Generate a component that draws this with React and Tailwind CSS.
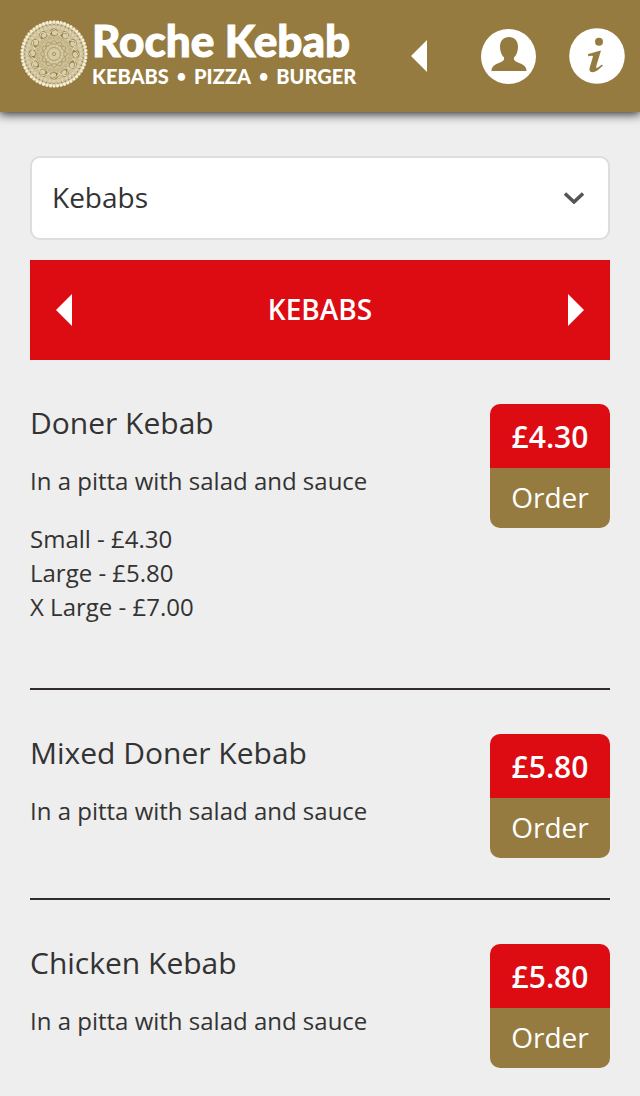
const items = [
  {
    name: "Doner Kebab",
    description: "In a pitta with salad and sauce",
    price: "£4.30",
    sizes: ["Small - £4.30", "Large - £5.80", "X Large - £7.00"],
  },
  { name: "Mixed Doner Kebab", description: "In a pitta with salad and sauce", price: "£5.80", sizes: [] },
  { name: "Chicken Kebab", description: "In a pitta with salad and sauce", price: "£5.80", sizes: [] },
];

function Ring({ count, radius, children }) {
  return Array.from({ length: count }, (_, i) => (
    <g key={i} transform={`rotate(${(360 / count) * i}) translate(0 ${-radius})`}>
      {children}
    </g>
  ));
}

function Mandala() {
  return (
    <svg viewBox="-34 -34 68 68" className="size-[68px] shrink-0" fill="none" aria-hidden="true">
      <circle r="32" fill="#cdc19b" />
      <Ring count={56} radius={32}><circle r="1.7" fill="#f3edd5" /></Ring>
      <Ring count={48} radius={29.5}><circle r="0.8" fill="#a28b50" /></Ring>
      <Ring count={40} radius={27}><circle r="1" stroke="#e6ddbd" strokeWidth="0.8" /></Ring>
      <Ring count={12} radius={22}>
        <path d="M-4 2.5Q-5 -3 0 -3.5Q5 -3 4 2.5Q0 5 -4 2.5Z" fill="#957d40" />
        <ellipse cx="0.6" cy="0.9" rx="2.7" ry="2.2" fill="#d9cfab" />
        <path d="M-5.2 3Q0 -8 5.2 3" stroke="#e4dab8" strokeWidth="1" />
      </Ring>
      <Ring count={24} radius={16.5}><circle r="1.3" stroke="#b7a675" strokeWidth="0.7" /></Ring>
      <Ring count={12} radius={12.5}><path d="M-3 2Q0 -4 3 2Q0 4 -3 2" stroke="#ac9963" strokeWidth="0.8" /></Ring>
      <Ring count={16} radius={8.5}><circle r="0.8" fill="#e4dab8" /></Ring>
      <circle r="6.5" stroke="#b09e69" strokeWidth="0.9" />
      <Ring count={8} radius={4}><circle r="1.2" stroke="#e4dab8" strokeWidth="0.6" /></Ring>
      <circle r="1.7" stroke="#a8935c" strokeWidth="0.8" />
    </svg>
  );
}

function Arrow({ direction }) {
  return (
    <svg viewBox="0 0 16 32" className="h-8 w-4 fill-white" aria-hidden="true">
      <path d={direction === "left" ? "M16 0V32L0 16Z" : "M0 0V32L16 16Z"} />
    </svg>
  );
}

function Header() {
  return (
    <header className="flex h-28 items-center bg-[#957b3f] pr-[15px] pl-5 shadow-[0_1px_10px_1px_rgba(0,0,0,0.85)]">
      <a href="#home" className="flex items-center gap-1 pb-1 text-white">
        <Mandala />
        <span className="flex flex-col font-['Lato',sans-serif] font-black whitespace-nowrap">
          <span className="text-[44px] leading-[44px] [-webkit-text-stroke:1px_white]">Roche Kebab</span>
          <span className="flex gap-2 text-[20px] leading-7">
            KEBABS <span className="text-base leading-7">•</span> PIZZA{" "}
            <span className="text-base leading-7">•</span> BURGER
          </span>
        </span>
      </a>
      <nav className="ml-auto flex items-center">
        <button type="button" aria-label="Back" className="mr-[54px]">
          <Arrow direction="left" />
        </button>
        <button type="button" aria-label="Account" className="mr-8">
          <svg viewBox="0 0 56 56" className="size-14" aria-hidden="true">
            <circle cx="27.5" cy="28.5" r="27.5" fill="#fff" />
            <path
              fill="#957b3f"
              d="M28 9C22.5 9 19 13 19 18.5C19 23.5 20.5 27 23 29.5C23.5 32 22.5 33.3 18.5 34.8C13 36.8 10.5 39 10.5 43H45.5C45.5 39 43 36.8 37.5 34.8C33.5 33.3 32.5 32 33 29.5C35.5 27 37 23.5 37 18.5C37 13 33.5 9 28 9Z"
            />
          </svg>
        </button>
        <button type="button" aria-label="Information">
          <svg viewBox="0 0 56 56" className="size-14" aria-hidden="true">
            <circle cx="28" cy="28" r="27.8" fill="#fff" />
            <g fill="#957b3f">
              <circle cx="30" cy="13.8" r="4" />
              <path d="M19 26C23 25.4 28 22.9 32 22.5L27.3 38C26.8 40.2 27.8 40.3 29.3 39.2L33 36.5L33.8 37.7C30 41.5 26.5 44.2 23.5 44.2C20.5 44.2 20.1 41.8 20.8 39.3L23.8 29.2C24.3 27.3 22.5 27.6 19.3 28.2Z" />
            </g>
          </svg>
        </button>
      </nav>
    </header>
  );
}

function MenuItem({ item }) {
  return (
    <li className="flex items-start justify-between border-b-2 border-[#312b2f] pt-11 pb-10">
      <div className="text-2xl leading-[34px]">
        <h3 className="mb-[22px] text-[30px] leading-[38px]">{item.name}</h3>
        <p>{item.description}</p>
        {item.sizes.length > 0 && (
          <ul className="my-6">
            {item.sizes.map((size) => (
              <li key={size}>{size}</li>
            ))}
          </ul>
        )}
      </div>
      <button
        type="button"
        aria-label={`Order ${item.name}, ${item.price}`}
        className="flex w-[120px] shrink-0 flex-col overflow-hidden rounded-[10px] text-center text-white"
      >
        <span className="h-16 w-full bg-[#dd0b12] text-[30px] leading-[66px] font-semibold">{item.price}</span>
        <span className="h-[60px] w-full bg-[#957b3f] text-[28px] leading-[58px]">Order</span>
      </button>
    </li>
  );
}

export default function App() {
  return (
    <div className="min-h-screen bg-[#eee] font-['Open_Sans','Noto_Sans',sans-serif] text-[#333]">
      <Header />
      <main className="px-[30px] pt-11">
        <div className="relative">
          <select
            aria-label="Menu category"
            defaultValue="Kebabs"
            className="block h-[84px] w-full appearance-none rounded-[10px] border-2 border-[#ddd] bg-white px-5 pb-0.5 text-[28px]"
          >
            <option>Kebabs</option>
          </select>
          <svg
            viewBox="0 0 20 12"
            className="pointer-events-none absolute top-9 right-[26px] h-3 w-5 fill-none stroke-[#555]"
            strokeWidth="3.5"
            aria-hidden="true"
          >
            <path d="M1 1.5L10 10L19 1.5" />
          </svg>
        </div>
        <div className="mt-5 flex h-[100px] items-center justify-between bg-[#dd0b12] px-[26px] text-white">
          <button type="button" aria-label="Previous category">
            <Arrow direction="left" />
          </button>
          <h2 className="pb-0.5 text-[28px] font-semibold">KEBABS</h2>
          <button type="button" aria-label="Next category">
            <Arrow direction="right" />
          </button>
        </div>
        <ul>
          {items.map((item) => (
            <MenuItem key={item.name} item={item} />
          ))}
        </ul>
      </main>
    </div>
  );
}
